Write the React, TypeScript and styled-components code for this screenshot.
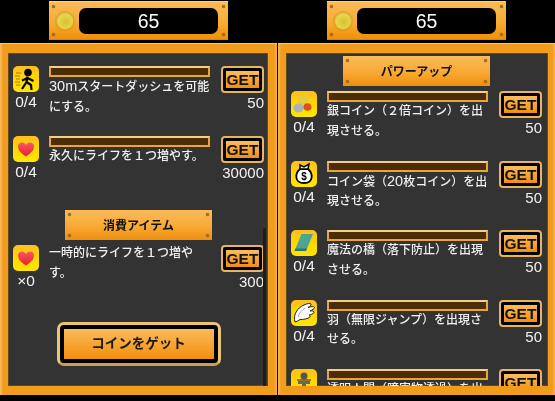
import React from "react";
import styled, { createGlobalStyle } from "styled-components";

const Global = createGlobalStyle`
  html, body { margin: 0; padding: 0; background: #000; }
  body { width: 555px; height: 401px; overflow: hidden; font-family: "Liberation Sans", "Noto Sans CJK JP", sans-serif; }
`;
const Page = styled.div`display: flex; gap: 1px; width: 555px; height: 401px; background: #000; overflow: hidden; filter: blur(0.35px);`;
const Screen = styled.section`display: flex; flex-direction: column; align-items: center; width: 277px; flex: none; padding-top: 1px; box-sizing: border-box;`;
const Plate = styled.div`
  position: relative; display: flex; align-items: center; box-sizing: border-box; width: 179px; height: 39px; padding: 0 10px 0 7px; gap: 5px;
  background: linear-gradient(#fabb58, #f9ab35 55%, #f09008); border-top: 1px solid #fcd08c; border-bottom: 1px solid #d98410;
`;
const Rivet = styled.i<{ $x: string; $y: string }>`
  position: absolute; width: 3px; height: 3px; border-radius: 50%; background: #a9701f; box-shadow: 0 0 1px #6d4510;
  ${p => p.$x}: 3px; ${p => p.$y}: 3px;
`;
const Rivets = () => (<>
  <Rivet $x="left" $y="top" /><Rivet $x="right" $y="top" /><Rivet $x="left" $y="bottom" /><Rivet $x="right" $y="bottom" />
</>);
const Coin = styled.div`
  width: 18px; height: 18px; border-radius: 50%; flex: none; box-sizing: border-box;
  background: radial-gradient(circle at 55% 55%, #d9c12c, #e8d550 60%, #c2a61c 100%); border: 1px solid #d5b42a; box-shadow: 0 0 2px #b97a16;
`;
const Count = styled.div`
  flex: 1; height: 26px; background: #000; border-radius: 7px; color: #fff; font-size: 19.5px; line-height: 26px; text-align: center;
`;
const Panel = styled.div<{ $right: number }>`
  margin-top: 3px; width: 100%; height: 352px; box-sizing: border-box; padding: 9px ${p => p.$right}px 9px 8px; flex: none;
  background: linear-gradient(90deg, #fbbd68 0, #f29c1c 3px, #f29c1c calc(100% - 3px), #f7b04e 100%);
  border-top: 1px solid #fcc67c;
`;
const Inner = styled.div`
  position: relative; height: 100%; background: #333; overflow: hidden; box-shadow: inset 0 0 0 1px #5f4a26;
`;
const List = styled.div<{ $top: number }>`padding: ${p => p.$top}px 0 0 5px; color: #f2f2f2;`;
const Section = styled.div<{ $lead: number }>`
  position: relative; display: flex; align-items: center; justify-content: center; box-sizing: border-box; width: 147px; height: 30px; margin: ${p => p.$lead}px 0 5px 52px; padding-bottom: 2px;
  background: linear-gradient(#fbbb5a, #f8a935 55%, #ee8f0c); color: #111; font-size: 12px; font-weight: 700;
`;
const Row = styled.div<{ $h: number }>`display: flex; height: ${p => p.$h}px;`;
const Side = styled.div`display: flex; flex-direction: column; align-items: center; width: 26px; flex: none;`;
const Tile = styled.div`
  width: 26px; height: 26px; border-radius: 5px; background: linear-gradient(#ffbe1e, #ffd800 50%, #ffe600); display: flex; align-items: center; justify-content: center;
`;
const Stat = styled.div`font-size: 15.5px; line-height: 20px; white-space: nowrap;`;
const Body = styled.div`width: 164px; margin-left: 10px; flex: none;`;
const Bar = styled.div`
  width: 161px; height: 11px; box-sizing: border-box; background: #4c2d08; border: 2px solid #e9a53a; border-top-color: #f5cf85;
`;
const Desc = styled.p<{ $bare?: boolean }>`
  margin: ${p => (p.$bare ? "-1px" : "0")} 0 0; font-size: 12px; font-weight: 500; line-height: 19.5px; color: #f0f0f0; white-space: nowrap;
`;
const Latin = styled.span`font-size: 14.5px;`;
const Buy = styled.div`display: flex; flex-direction: column; align-items: flex-end; width: 43px; margin-left: 8px; flex: none;`;
const GetButton = styled.button`
  width: 43px; height: 27px; box-sizing: border-box; padding: 0; border: 2px solid #e8b45c; border-radius: 4px; background: #000; display: flex; cursor: pointer;
`;
const GetFace = styled.span`
  margin: 3px; flex: 1; background: linear-gradient(#fbbc5c, #f08f10); color: #111; font: 700 15.5px/17px "Liberation Sans", sans-serif; text-align: center;
`;
const Price = styled.div`font-size: 15px; line-height: 20px; white-space: nowrap;`;
const BigWrap = styled.div`display: flex; justify-content: center; margin-top: 7px; padding-right: 4px;`;
const BigButton = styled.button`
  width: 164px; height: 44px; padding: 0; box-sizing: border-box; border: 3px solid #ecc475; border-bottom-color: #c99f52; border-radius: 7px; background: #000; display: flex; cursor: pointer;
`;
const BigFace = styled.span`
  flex: 1; margin: 4px 4px; background: linear-gradient(#fbbb5c, #f28f0c); color: #1a1a1a; font: 700 13.5px/29px "Liberation Sans", "Noto Sans CJK JP", sans-serif; text-align: center;
`;
const Scroll = styled.div`position: absolute; left: 255px; top: 175px; bottom: 0; width: 3px; background: #1d1d1d; border-radius: 2px;`;

const Svg = ({ children }: { children: React.ReactNode }) => <svg width="26" height="26" viewBox="0 0 26 26">{children}</svg>;
const Icon = ({ kind }: { kind: string }) => {
  switch (kind) {
    case "run": return <Svg>
      <circle cx="15" cy="6.5" r="3.8" fill="#000" />
      <path d="M14.5 10.5 L13.5 16 L9 23 M13.5 16 L18 19 L18.5 24 M14.5 12 L9 14.5 M14.5 12 L20.5 15" stroke="#000" strokeWidth="2.2" fill="none" />
      <path d="M3 7h5M2 10h5M3 13h4M2 16h5M3 19h4" stroke="#a87b10" strokeWidth="1.2" />
    </Svg>;
    case "heart": return <Svg>
      <defs><linearGradient id="hg" x1="0" y1="0" x2="0" y2="1"><stop offset="0" stopColor="#f8566a" /><stop offset="1" stopColor="#e8202a" /></linearGradient></defs>
      <path d="M13 20.5 C7 16.5 5 13.5 5 10.5 C5 8 7 6.5 9 6.5 C10.8 6.5 12.2 7.5 13 9 C13.8 7.5 15.2 6.5 17 6.5 C19 6.5 21 8 21 10.5 C21 13.5 19 16.5 13 20.5Z" fill="url(#hg)" />
    </Svg>;
    case "coins": return <Svg>
      <ellipse cx="12" cy="9" rx="5.5" ry="5" fill="#e6cb3e" /><ellipse cx="7.5" cy="17" rx="5" ry="4.5" fill="#a9b4b8" /><ellipse cx="16.5" cy="16" rx="4" ry="3.8" fill="#d9521c" />
    </Svg>;
    case "bag": return <Svg>
      <path d="M9 8 C4 12 3 22 13 22 C23 22 22 12 17 8Z" fill="#fff" stroke="#000" strokeWidth="1.8" />
      <path d="M9 4 L13 6 L18 3 L17 8 H9Z" fill="#fff" stroke="#000" strokeWidth="1.5" />
      <text x="13" y="19" fontSize="10" fontWeight="700" textAnchor="middle" fontFamily="Liberation Sans" fill="#000">$</text>
    </Svg>;
    case "bridge": return <Svg><path d="M10.5 4 H22 L15 21 H3.5Z" fill="#4aa592" /><path d="M3.5 21 H15 L16 18.5 H4.5Z" fill="#2f7668" /></Svg>;
    case "wing": return <Svg>
      <path d="M4 22 C2 15 6 8 13 5 C16 3.5 19 3 20 4 C20.5 5 19 6.5 17 7.5 C20 6.5 23 6 23.5 7.5 C23.5 9 21 10 19 11 C21 10.8 23 10.8 23 12.3 C22.5 14 20 14.5 18 15 C19 15.5 19.5 16 19 17 C17 19 12 19.5 9 19.5 C7.5 20.5 6 21.5 4 22Z" fill="#fff" stroke="#222" strokeWidth="1" />
      <path d="M7 17 C8 13 11 10 14 8" stroke="#888" strokeWidth="0.8" fill="none" />
    </Svg>;
    default: return <Svg>
      <circle cx="13" cy="7" r="3.5" fill="#555" /><path d="M7 12 H19 V15 H15 V22 H11 V15 H7Z" fill="#666" /><path d="M6 11h14M8 18h10" stroke="#222" strokeWidth="1" />
    </Svg>;
  }
};

type Item = { icon: string; stat: string; text: string[]; price: string; bare?: boolean };
const Line = ({ text }: { text: string }) => (
  <>{text.split(/([0-9a-z]+)/).map((part, i) => (i % 2 ? <Latin key={i}>{part}</Latin> : part))}</>
);
const Entry = ({ item, h }: { item: Item; h: number }) => (
  <Row $h={h}>
    <Side><Tile><Icon kind={item.icon} /></Tile><Stat>{item.stat}</Stat></Side>
    <Body>
      {!item.bare && <Bar />}
      <Desc $bare={item.bare}>{item.text.map((t, i) => <React.Fragment key={i}>{i > 0 && <br />}<Line text={t} /></React.Fragment>)}</Desc>
    </Body>
    <Buy><GetButton><GetFace>GET</GetFace></GetButton><Price>{item.price}</Price></Buy>
  </Row>
);
const Header = () => (
  <Plate><Rivets /><Coin /><Count>65</Count></Plate>
);

const leftA: Item[] = [
  { icon: "run", stat: "0/4", text: ["30mスタートダッシュを可能", "にする。"], price: "50" },
  { icon: "heart", stat: "0/4", text: ["永久にライフを１つ増やす。"], price: "30000" },
];
const leftB: Item = { icon: "heart", stat: "×0", text: ["一時的にライフを１つ増や", "す。"], price: "300", bare: true };
const right: Item[] = [
  { icon: "coins", stat: "0/4", text: ["銀コイン（２倍コイン）を出", "現させる。"], price: "50" },
  { icon: "bag", stat: "0/4", text: ["コイン袋（20枚コイン）を出", "現させる。"], price: "50" },
  { icon: "bridge", stat: "0/4", text: ["魔法の橋（落下防止）を出現", "させる。"], price: "50" },
  { icon: "wing", stat: "0/4", text: ["羽（無限ジャンプ）を出現さ", "せる。"], price: "50" },
  { icon: "man", stat: "0/4", text: ["透明人間（障害物透過）を出", "現させる。"], price: "50" },
];

export default function App() {
  return (
    <Page>
      <Global />
      <Screen>
        <Header />
        <Panel $right={9}>
          <Inner>
            <List $top={13}>
              {leftA.map((it, i) => <Entry key={i} item={it} h={70} />)}
              <Section $lead={4}><Rivets />消費アイテム</Section>
              <Entry item={leftB} h={70} />
              <BigWrap><BigButton><BigFace>コインをゲット</BigFace></BigButton></BigWrap>
            </List>
            <Scroll />
          </Inner>
        </Panel>
      </Screen>
      <Screen>
        <Header />
        <Panel $right={7}>
          <Inner>
            <List $top={3}>
              <Section $lead={0}><Rivets />パワーアップ</Section>
              {right.map((it, i) => <Entry key={i} item={it} h={69.5} />)}
            </List>
          </Inner>
        </Panel>
      </Screen>
    </Page>
  );
}
